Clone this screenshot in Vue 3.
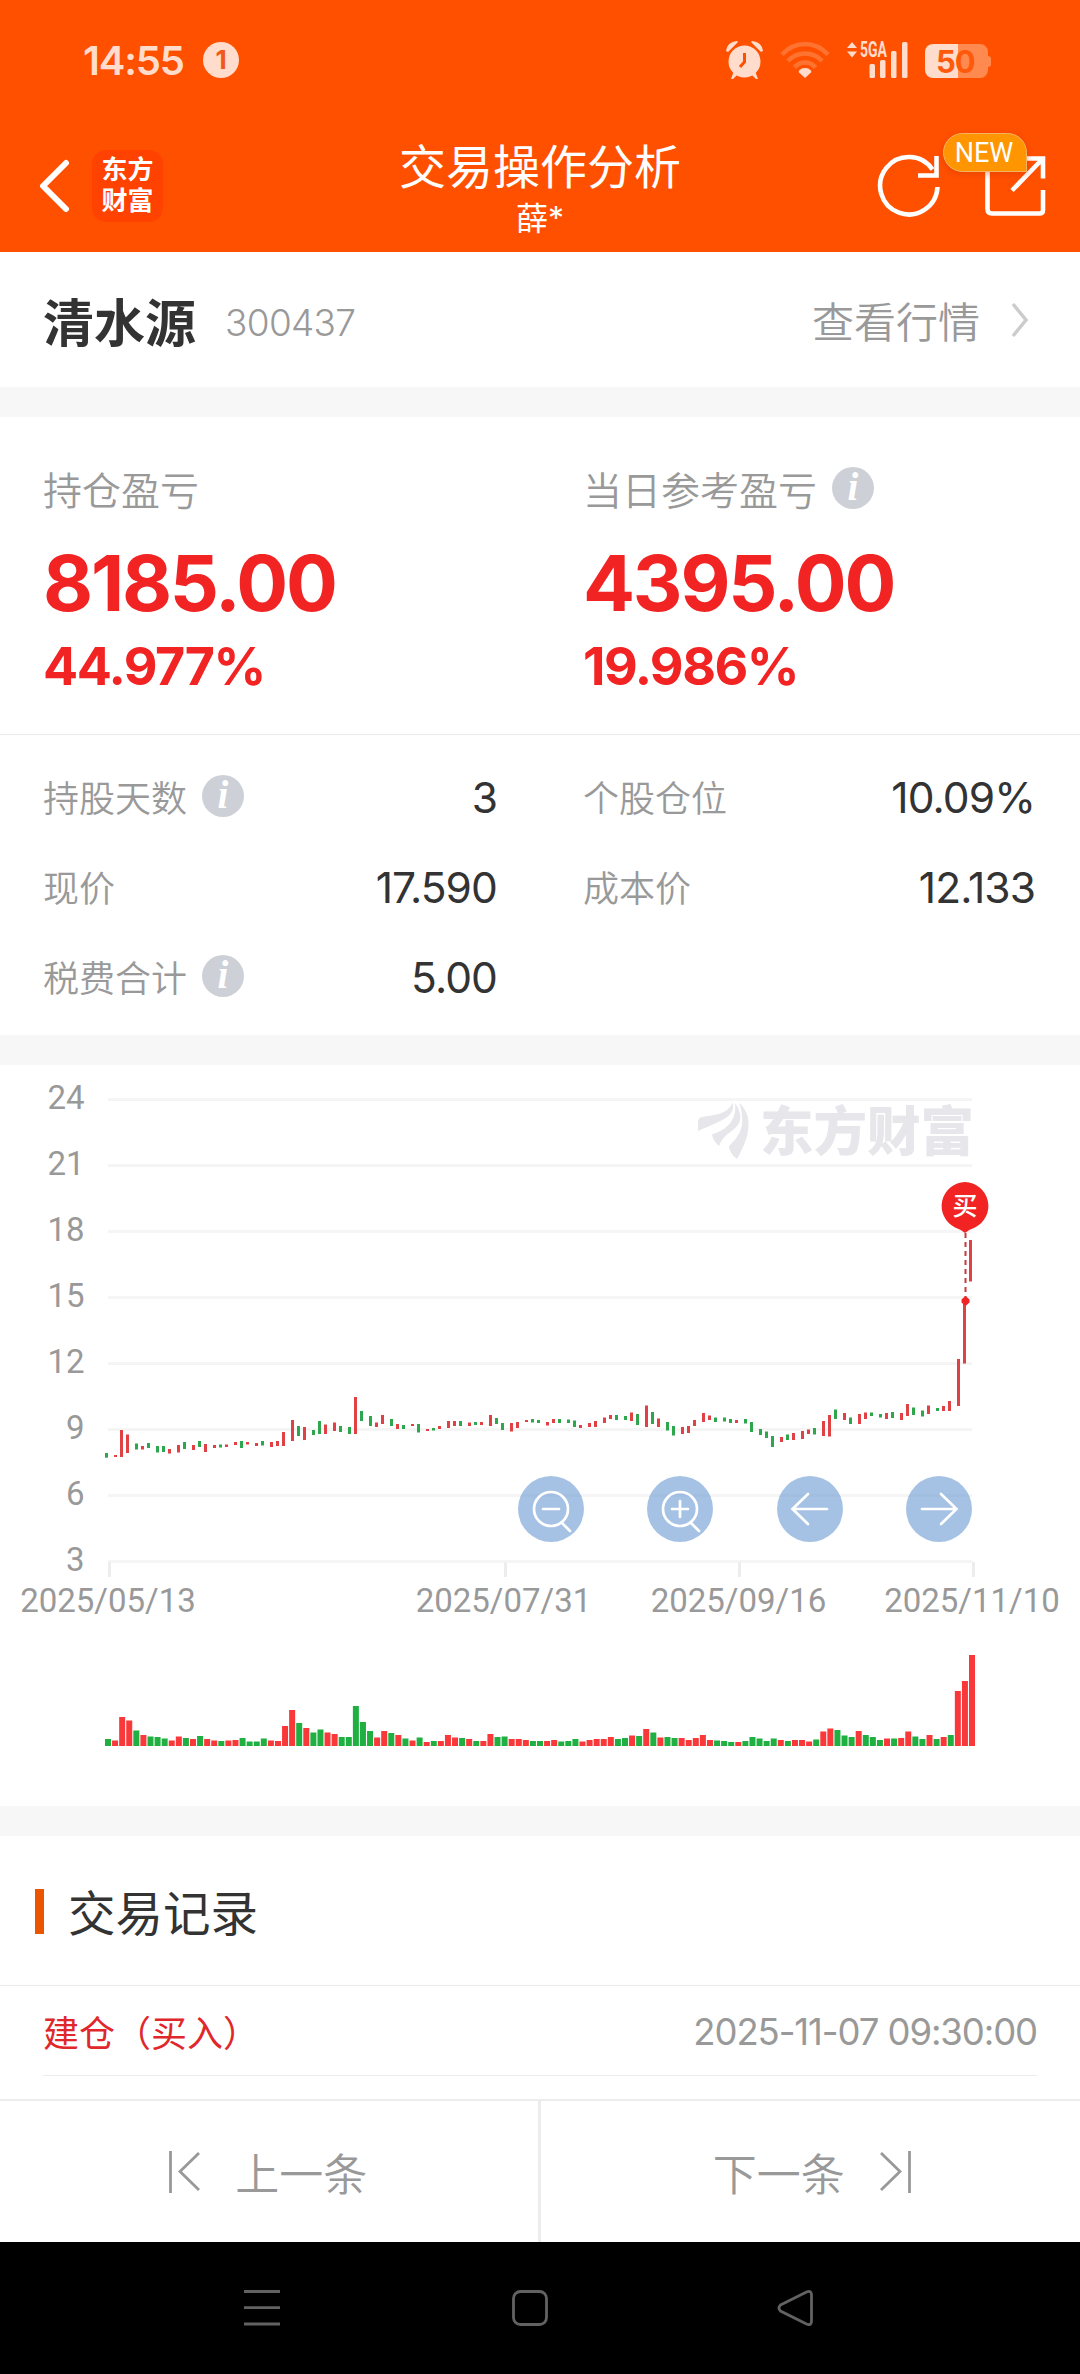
<template>
  <div class="page">
    <header class="header">
      <div class="status">
        <span class="clock">14:55</span>
        <span class="notice">1</span>
        <svg class="status-icons" width="270" height="60" viewBox="724 30 270 60">
          <g fill="#ffdccb">
            <circle cx="744.500" cy="61.500" r="16" />
            <path d="M726 51q1-9 11-10l1 1-10 10zM763 51q-1-9-11-10l-1 1 10 10z" />
            <path d="M734 71l-3 8h2l6-6zM755 71l3 8h-2l-6-6z" />
            <path d="M805 68q5 0 6.500 4l-6.500 6-6.500-6q1.500-4 6.500-4z" />
            <path d="M847 48l5-6 5 6zM847 51.500h10l-5 6z" />
            <rect x="869.500" y="64" width="5.500" height="14" rx="1.500" />
            <rect x="880" y="60" width="5.500" height="18" rx="1.500" />
            <rect x="891" y="51" width="5.500" height="27" rx="1.500" />
            <rect x="902" y="42" width="5.500" height="36" rx="1.500" />
            <path d="M958 44h-25a8 8 0 0 0-8 8v18a8 8 0 0 0 8 8h25z" />
          </g>
          <path d="M744.500 53v9l-4.500 5" fill="none" stroke="#ff5000" stroke-width="3" />
          <g fill="none" stroke="#ff7331" stroke-width="4.500">
            <path d="M782 54.500q10-10.500 23-10.500t23 10.500" />
            <path d="M788 61q7-7.500 17-7.500t17 7.500" />
            <path d="M794.500 67.500q4-5 10.500-5t10.500 5" />
          </g>
          <path d="M958 44h22a8 8 0 0 1 8 8v4q3 0 3 3v5q0 3-3 3v3a8 8 0 0 1-8 8h-22z" fill="#ff8a50" />
          <text class="net" x="860" y="57" textLength="27" lengthAdjust="spacingAndGlyphs">5GA</text>
          <text class="battery" x="936" y="73">50</text>
        </svg>
      </div>
      <div class="bar">
        <div class="bar-left">
          <svg width="32" height="56" viewBox="0 0 32 56">
            <path d="M28 5L5 28l23 23" fill="none" stroke="#fff" stroke-width="6" stroke-linecap="round" stroke-linejoin="round" />
          </svg>
          <div class="brand"><span>东方</span><span>财富</span></div>
        </div>
        <div class="titles">
          <h1>交易操作分析</h1>
          <p>薛*</p>
        </div>
        <div class="bar-right">
          <svg width="170" height="66" viewBox="877 153 170 66">
            <g fill="none" stroke="#fff" stroke-width="4.600">
              <path d="M937.500 187a28.700 28.700 0 1 1-5-17.500" />
              <path d="M936.500 156v19.500h-18.500" />
              <path d="M987.500 168v41q0 4.500 4.500 4.500h47.500q3.500 0 3.500-3.500v-20" />
              <path d="M1017 158.500h26v20M1042 159.500l-30 31" />
            </g>
          </svg>
          <span class="new">NEW</span>
        </div>
      </div>
    </header>

    <section class="stock">
      <strong>清水源</strong>
      <span class="code">300437</span>
      <a class="quote">查看行情</a>
      <svg width="18" height="36" viewBox="0 0 18 36">
        <path d="M2 2l13 16L2 34" fill="none" stroke="#ccc" stroke-width="3.500" />
      </svg>
    </section>

    <section class="profit">
      <div v-for="p in profits" :key="p.label" class="profit-item">
        <div class="label">{{ p.label }}<i v-if="p.info" class="info">i</i></div>
        <div class="amount">{{ p.amount }}</div>
        <div class="rate">{{ p.rate }}</div>
      </div>
    </section>

    <section class="detail">
      <div v-for="d in details" :key="d.label" class="detail-item">
        <span class="label">{{ d.label }}<i v-if="d.info" class="info">i</i></span>
        <span class="value">{{ d.value }}</span>
      </div>
    </section>

    <section class="chart">
      <svg width="1080" height="741" viewBox="0 0 1080 741">
        <g v-for="(n, i) in levels" :key="n">
          <rect x="108" :y="33 + i * 66" width="864" height="3" fill="#f5f5f6" />
          <text class="axis" x="84.500" :y="44 + i * 66" text-anchor="end">{{ n }}</text>
        </g>
        <g v-for="d in dates" :key="d.text">
          <rect :x="d.tick" y="497" width="3" height="15" fill="#ededed" />
          <text class="axis" :x="d.x" y="547" text-anchor="middle">{{ d.text }}</text>
        </g>

        <g fill="#e6e6eb">
          <path d="M698 66v-9q0-4 4-5C712 50 728 50 732.500 37.500C737 52 718 57 698 66z" />
          <path d="M712 69.500C728 64 737 55 735 38C743 50 742 58 733 65Q722 72 719 81Q713 76 712 69.500z" />
          <path d="M739.500 38C752 50 752 68 737 94Q729 88 729 81C743 68 745 58 739.500 38z" />
          <text class="watermark" x="760" y="86">东方财富</text>
        </g>

        <g transform="translate(0 305)">
          <rect
            v-for="b in bars"
            :key="b.i"
            :x="b.x"
            :y="b.top"
            width="3"
            :height="b.bottom - b.top"
            :fill="b.up ? '#e04145' : '#2ea64d'"
          />
          <rect
            v-for="b in bars"
            :key="'v' + b.i"
            :x="b.vx"
            :y="376 - b.vol"
            width="6"
            :height="b.vol"
            :fill="b.volUp ? '#f9383a' : '#1fb041'"
          />
        </g>

        <path d="M965.500 168v64" stroke="#c8383c" stroke-width="2" stroke-dasharray="5 4" />
        <path d="M965.500 231l4 3.500v3l-4 3.500-4-3.500v-3z" fill="#f22323" />
        <path d="M965 117a24 24 0 0 1 10 45.500q-6 2-10 5.500-4-3.500-10-5.500a24 24 0 0 1 10-45.500z" fill="#f22323" />
        <text class="buy" x="965" y="150" text-anchor="middle">买</text>

        <g v-for="t in tools" :key="t.x" :transform="`translate(${t.x} 444)`">
          <circle r="33" fill="rgba(105,153,210,.6)" />
          <path :d="t.d" fill="none" stroke="#fff" stroke-width="2.700" stroke-linecap="round" />
        </g>
      </svg>
    </section>

    <section class="records">
      <h2>交易记录</h2>
      <div class="record">
        <span class="type">建仓（买入）</span>
        <time>2025-11-07 09:30:00</time>
      </div>
    </section>

    <footer class="pager">
      <button>
        <svg width="32" height="44" viewBox="0 0 32 44">
          <path d="M2.500 1v42M31 3L12 21.500 31 40" fill="none" stroke="#999" stroke-width="2.800" />
        </svg>
        上一条
      </button>
      <button>
        下一条
        <svg width="32" height="44" viewBox="0 0 32 44">
          <path d="M29.500 1v42M1 3l19 18.500L1 40" fill="none" stroke="#999" stroke-width="2.800" />
        </svg>
      </button>
    </footer>

    <nav class="sysbar">
      <svg width="1080" height="132" viewBox="0 0 1080 132" fill="none" stroke="#626262" stroke-width="2.800">
        <path d="M244 49.500h36M244 65.700h36M244 82h36" />
        <rect x="513.500" y="49.500" width="33" height="33" rx="7" />
        <path d="M780.500 63l26-13q5-2 5 3v26q0 5-5 3l-26-13q-3-3 0-6z" />
      </svg>
    </nav>
  </div>
</template>

<script setup>
const profits = [
  { label: '持仓盈亏', amount: '8185.00', rate: '44.977%' },
  { label: '当日参考盈亏', amount: '4395.00', rate: '19.986%', info: true },
];

const details = [
  { label: '持股天数', value: '3', info: true },
  { label: '个股仓位', value: '10.09%' },
  { label: '现价', value: '17.590' },
  { label: '成本价', value: '12.133' },
  { label: '税费合计', value: '5.00', info: true },
];

const levels = [24, 21, 18, 15, 12, 9, 6, 3];

const dates = [
  { text: '2025/05/13', tick: 108, x: 108 },
  { text: '2025/07/31', tick: 504, x: 503.5 },
  { text: '2025/09/16', tick: 738, x: 738.5 },
  { text: '2025/11/10', tick: 972, x: 972 },
];

const lens = 'M17 0A17 17 0 1 1 -17 0A17 17 0 1 1 17 0M11 14l8 8M-8 0h16';
const tools = [
  { x: 551, d: lens },
  { x: 680, d: lens + 'M0 -8v16' },
  { x: 810, d: 'M17 0h-34M-2 -15L-17.500 0L-2 15' },
  { x: 939, d: 'M-17 0h34M2 -15L17.500 0L2 15' },
];

// [涨跌, 最高, 最低, 成交量, 量柱颜色(与涨跌不同时)]
const raw = [
  ['g', 83, 87.7, 7], ['r', 85, 87, 5.5], ['r', 60, 87, 29], ['r', 64.5, 83, 25.5], ['g', 73.5, 79.5, 15.5],
  ['r', 76, 79.5, 11], ['g', 73, 78, 9.5], ['g', 76, 82.5, 9], ['g', 76, 82, 7.5], ['r', 79, 83.5, 5.5],
  ['r', 75, 82.5, 9.5], ['g', 72, 79, 8], ['r', 75, 80, 7], ['g', 71, 77, 10], ['r', 74, 82, 7],
  ['r', 75, 78, 5.5], ['g', 74.5, 77.5, 5], ['r', 74.5, 77, 5.5], ['r', 72, 75, 6], ['g', 71, 78, 8],
  ['r', 72, 74.5, 4.5, 'g'], ['r', 73, 76, 4.5, 'g'], ['g', 71, 75.5, 7.5], ['r', 72, 77, 5.5], ['r', 71, 76, 5],
  ['r', 62, 76, 20], ['r', 50, 71, 36], ['g', 56, 66, 23], ['r', 57, 70, 18], ['g', 60, 65, 13.5],
  ['g', 51, 64, 16.5], ['r', 54.5, 64, 13.5], ['r', 52.5, 61, 12], ['g', 56, 62, 9], ['g', 57, 64, 9],
  ['r', 27, 64, 40, 'g'], ['g', 41, 51, 24], ['g', 46, 56, 15], ['r', 52.5, 57, 8.5], ['r', 45, 54, 15],
  ['g', 49, 56, 13], ['r', 54, 59, 11], ['g', 55, 59, 7.5], ['r', 54, 56, 5.5], ['g', 54, 62.5, 8.5],
  ['r', 59, 61, 4], ['g', 58, 60.5, 5], ['r', 56, 59, 5], ['r', 51, 58, 11], ['r', 51, 56, 8.5],
  ['g', 51, 56, 8], ['r', 52.5, 56, 7], ['g', 52, 55, 5], ['r', 52, 55, 5], ['r', 45, 56, 12],
  ['g', 48, 54, 9], ['g', 53, 60, 9.5], ['r', 53, 61.5, 7], ['r', 52, 58, 7], ['r', 50, 52, 6],
  ['g', 49, 52.5, 5], ['g', 50, 53, 5], ['r', 52, 55.5, 5], ['r', 49, 53, 6], ['g', 49, 53, 4.5],
  ['g', 49.5, 53, 5], ['g', 50.5, 57, 7], ['r', 55, 58, 4.5], ['r', 53, 57, 6], ['r', 51, 57, 7],
  ['r', 47.5, 53, 7], ['r', 45, 49, 9], ['g', 45, 50, 7], ['g', 46, 50, 8], ['r', 42.5, 51, 10.5],
  ['g', 44, 55, 10], ['r', 35.5, 57, 17], ['g', 42, 54, 13.5], ['r', 48.5, 57, 8.5], ['g', 52, 60.5, 9],
  ['g', 56, 65.5, 8], ['r', 57, 64, 8], ['r', 56, 63, 6], ['r', 50, 56, 8], ['r', 43, 52, 11],
  ['r', 45.5, 50, 6], ['g', 47.5, 52, 5.5], ['g', 47.5, 51.5, 5], ['g', 49, 53, 4], ['r', 50, 53, 4],
  ['g', 49, 53.5, 5], ['g', 52, 62, 9], ['g', 59, 65, 7.5], ['g', 61.5, 68, 5], ['g', 66, 77, 7.5],
  ['r', 67, 72, 6], ['g', 64.5, 70, 5], ['r', 63, 70, 6], ['r', 61, 69, 6], ['r', 59.5, 64, 4.5],
  ['g', 58, 64.5, 6.5], ['r', 51, 66, 14.5], ['r', 45, 66.5, 17.5], ['g', 39.5, 49, 16], ['r', 43, 50, 10.5, 'g'],
  ['g', 47.5, 54, 9], ['r', 44, 54, 15], ['r', 42.5, 49, 11, 'g'], ['g', 42.5, 46, 9], ['g', 44, 47.5, 6],
  ['r', 43, 49, 7.5], ['g', 42, 48, 7.5], ['r', 43, 50, 8], ['r', 34, 46, 14.5], ['g', 37.5, 45, 9.5],
  ['g', 40.5, 46.5, 7], ['r', 35.5, 44, 11], ['g', 38, 41, 7], ['r', 36, 41, 9], ['r', 31, 41, 11, 'g'],
  ['r', -11, 36, 55], ['r', -69, -6.5, 65], ['r', -130, -88.5, 91],
];

const bars = raw.map(([dir, top, bottom, vol, volDir], i) => ({
  i,
  x: Math.round((105.7 + i * 7.085) / 3) * 3,
  vx: 105 + i * 7.082,
  top,
  bottom,
  vol,
  up: dir === 'r',
  volUp: (volDir || dir) === 'r',
}));
</script>

<style>
body{
  margin:0;
  background:#fff;
}
</style>

<style scoped>
.page{
  width:1080px;
  height:2374px;
  display:flex;
  flex-direction:column;
  overflow:hidden;
  background:#fff;
  color:#333;
  font-family:Inter, "Noto Sans CJK SC", sans-serif;
}
.page > *{
  flex:none;
  box-sizing:border-box;
}
.header{
  height:252px;
  background:#ff5000;
  color:#fff;
}
.status{
  display:flex;
  align-items:center;
  height:120px;
  padding:0 86px 0 83px;
}
.clock{
  width:120px;
  font-size:40px;
  font-weight:600;
  letter-spacing:-1.2px;
  color:#ffdccb;
}
.notice{
  width:36px;
  height:36px;
  border-radius:50%;
  background:#ffdccb;
  color:#f0591a;
  font-size:26px;
  font-weight:700;
  line-height:36px;
  text-align:center;
}
.status-icons{
  margin-left:auto;
}
.net{
  font-family:Roboto, sans-serif;
  font-size:22px;
  font-weight:700;
  fill:#ffdccb;
}
.battery{
  font-size:31px;
  font-weight:700;
  letter-spacing:-1px;
  fill:#ff5a0c;
}
.bar{
  display:grid;
  grid-template-columns:1fr auto 1fr;
  height:132px;
}
.bar-left{
  display:flex;
  align-items:center;
  gap:22px;
  height:132px;
  padding-left:38px;
}
.brand{
  display:flex;
  flex-direction:column;
  justify-content:center;
  align-items:center;
  width:71px;
  height:72px;
  border-radius:14px;
  background:#ff4200;
  font-family:"Liberation Sans", "Noto Sans CJK SC", sans-serif;
  font-size:26px;
  font-weight:700;
  line-height:31px;
}
.titles{
  text-align:center;
}
h1{
  margin:13px 0 0;
  font-size:47px;
  font-weight:400;
  line-height:68px;
}
.titles p{
  margin:0;
  font-size:32px;
  line-height:36px;
}
.bar-right{
  position:relative;
  display:flex;
  justify-content:flex-end;
  align-items:center;
  padding-right:33px;
}
.new{
  position:absolute;
  right:53px;
  top:13px;
  box-sizing:border-box;
  width:84px;
  height:39px;
  border:1px solid #f5b364;
  border-radius:20px 20px 0 20px;
  background:#ff9500;
  box-shadow:0 2px 6px rgba(200,50,0,.4);
  font-family:Roboto, sans-serif;
  font-size:27px;
  line-height:38px;
  text-indent:-2px;
  text-align:center;
}
.stock{
  display:flex;
  align-items:center;
  height:135px;
  padding:0 51px 0 43px;
}
.stock strong{
  font-size:51px;
  font-weight:700;
}
.code{
  margin-left:29px;
  padding-top:5px;
  color:#999;
  font-size:37px;
  font-weight:300;
  letter-spacing:-.7px;
}
.quote{
  margin:0 31px 0 auto;
  color:#999;
  font-size:42px;
  font-weight:350;
}
.profit{
  display:grid;
  grid-template-columns:540px 540px;
  height:348px;
  border-top:30px solid #f7f7f7;
  border-bottom:1px solid #ececec;
}
.profit-item{
  padding:42px 0 0 43px;
}
.label{
  display:flex;
  align-items:center;
  color:#999;
  font-weight:350;
}
.profit .label{
  height:58px;
  font-size:39px;
}
.info{
  width:42px;
  height:42px;
  margin-left:15px;
  border-radius:50%;
  background:#cdd0d6;
  color:#fff;
  font-family:"Liberation Serif", serif;
  font-size:39px;
  font-weight:700;
  line-height:40px;
  text-align:center;
}
.amount{
  margin-top:16px;
  color:#f22323;
  font-size:77px;
  font-weight:700;
  line-height:100px;
  letter-spacing:-2.2px;
}
.rate{
  margin-top:4px;
  color:#f22323;
  font-size:52px;
  font-weight:700;
  line-height:60px;
  letter-spacing:-1.500px;
}
.detail{
  display:grid;
  grid-template-columns:454px 452px;
  grid-auto-rows:90px;
  column-gap:86px;
  height:300px;
  padding:17px 40px 0 43px;
}
.detail-item{
  display:flex;
  justify-content:space-between;
  align-items:center;
}
.detail .label{
  padding-bottom:2px;
  font-size:36px;
}
.value{
  font-size:42.500px;
  letter-spacing:-.9px;
}
.chart{
  height:771px;
  border-top:30px solid #f7f7f7;
}
.chart svg{
  display:block;
}
.axis{
  font-family:Roboto, sans-serif;
  font-size:33px;
  fill:#999;
}
.watermark{
  font-family:"Noto Sans CJK SC", sans-serif;
  font-size:53.500px;
  font-weight:900;
}
.buy{
  font-size:25px;
  font-weight:500;
  fill:#fff;
}
.records{
  height:293px;
  border-top:30px solid #f7f7f7;
}
h2{
  display:flex;
  align-items:center;
  height:150px;
  box-sizing:border-box;
  margin:0;
  padding:0 0 1px 35px;
  border-bottom:1px solid #ececec;
  font-size:47.500px;
  font-weight:400;
}
h2::before{
  content:'';
  width:9px;
  height:45px;
  margin:3px 24px 0 0;
  background:#eb5500;
}
.record{
  display:flex;
  justify-content:space-between;
  align-items:center;
  height:89px;
  margin:0 43px;
  border-bottom:1px solid #ececec;
}
.type{
  color:#e0272b;
  font-size:36px;
}
time{
  padding-top:2px;
  color:#999;
  font-size:36.500px;
  letter-spacing:-1.100px;
}
.pager{
  display:flex;
  height:143px;
  border-top:2px solid #ececec;
}
.pager button{
  flex:1;
  display:flex;
  justify-content:center;
  align-items:center;
  gap:35px;
  padding:0 2px 0 0;
  border:none;
  background:none;
  color:#999;
  font:350 44px Inter, "Noto Sans CJK SC", sans-serif;
}
.pager button + button{
  padding:0 0 0 4px;
  border-left:3px solid #ececec;
}
.sysbar{
  height:132px;
  background:#000;
}
</style>
